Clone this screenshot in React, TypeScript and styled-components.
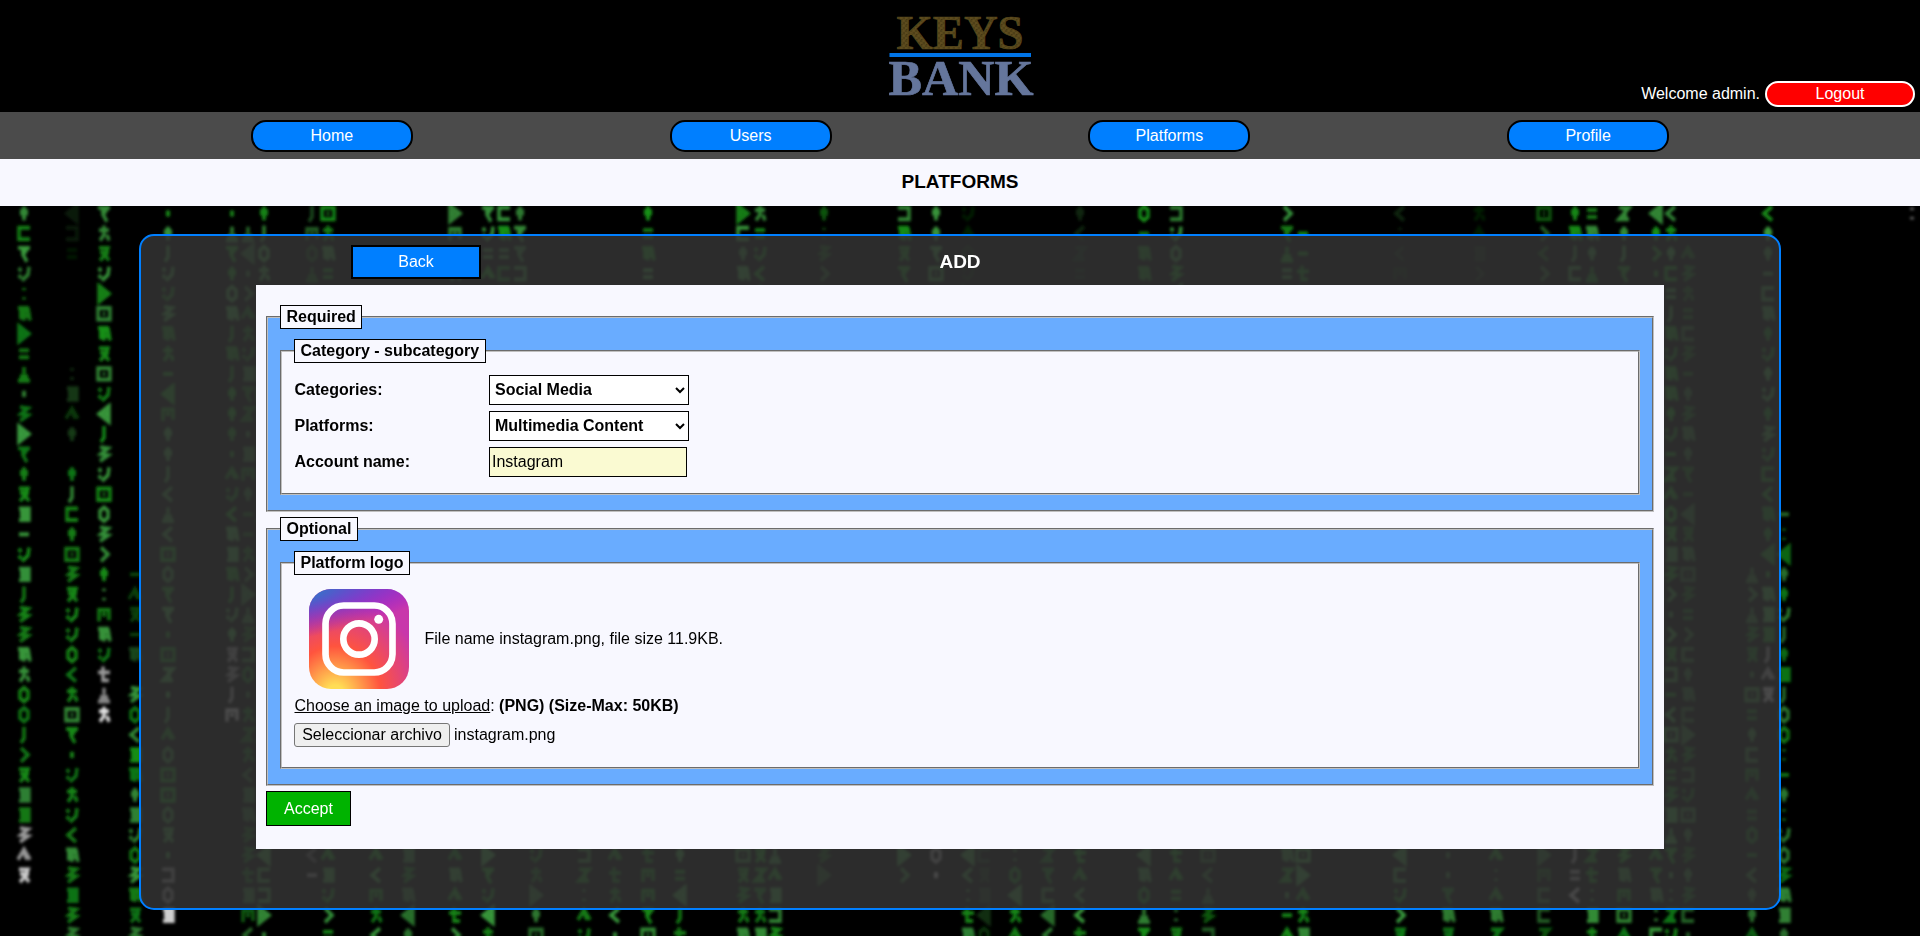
import React from "react";
import styled, { createGlobalStyle } from "styled-components";

const GlobalStyle = createGlobalStyle`
  *, *::before, *::after { box-sizing: border-box; }
  body {
    margin: 0;
    background: #000;
    font-family: Arial, "Liberation Sans", sans-serif;
    font-size: 16px;
    color: #000;
  }
  html, body { overflow: hidden; }
`;

const Page = styled.div`
  display: flex;
  flex-direction: column;
  height: 936px;
`;

const Header = styled.header`
  display: grid;
  grid-template-columns: 1fr auto 1fr;
  height: 112px;
  background: #000;
`;

const LogoSlot = styled.div`
  grid-column: 2;
  width: 160px;
  height: 112px;
`;

const Session = styled.div`
  display: flex;
  align-items: center;
  justify-content: flex-end;
  align-self: end;
  gap: 5px;
  padding: 0 5px 5px 0;
  color: #fff;
`;

const LogoutButton = styled.button`
  width: 150px;
  height: 26px;
  padding: 0 0 1px;
  border: 2px solid #fff;
  border-radius: 13px;
  background: #f00;
  color: #fff;
  font: inherit;
`;

const Nav = styled.nav`
  display: flex;
  justify-content: center;
  height: 47px;
  background: #4b4b4b;
`;

const NavList = styled.div`
  display: grid;
  grid-template-columns: repeat(4, 1fr);
  justify-items: center;
  width: 1675px;
  padding-top: 8px;
`;

const NavButton = styled.button`
  width: 162px;
  height: 32px;
  padding: 0;
  border: 2px solid #000;
  border-radius: 15px;
  background: #007fff;
  color: #fff;
  font: inherit;
`;

const TitleBar = styled.h1`
  display: flex;
  align-items: center;
  justify-content: center;
  height: 47px;
  margin: 0;
  padding-bottom: 1px;
  background: #f8f8ff;
  font-size: 19px;
  font-weight: bold;
`;

const Main = styled.main`
  position: relative;
  display: flex;
  justify-content: center;
  align-items: flex-start;
  flex: 1;
  padding-top: 28px;
  background: #000;
  overflow: hidden;
`;

const RainCanvas = styled.svg`
  position: absolute;
  inset: 0;
`;

const Panel = styled.section`
  position: relative;
  display: flex;
  flex-direction: column;
  align-items: center;
  width: 1642px;
  height: 676px;
  border: 2px solid #007fff;
  border-radius: 15px;
  background: rgba(51, 51, 51, 0.86);
`;

const PanelHead = styled.div`
  display: grid;
  grid-template-columns: 1fr auto 1fr;
  align-items: center;
  width: 1408px;
  height: 49px;
  padding: 2px 0 0 0;
`;

const BackButton = styled.button`
  width: 130px;
  height: 34px;
  margin-left: 95px;
  padding: 0;
  border: 2px solid #000;
  background: #007fff;
  color: #fff;
  font: inherit;
`;

const PanelTitle = styled.h2`
  margin: 0;
  color: #fff;
  font-size: 19px;
  line-height: 22px;
`;

const Form = styled.form`
  width: 1408px;
  height: 564px;
  padding: 20px 10px 0;
  background: #f8f8ff;
`;

const Group = styled.fieldset`
  margin: 0 0 5px;
  padding: 10px 12px 15px;
  border: 2px groove #c0c0c0;
  background: #69acff;
`;

const SubGroup = styled.fieldset<{ $bottom: number }>`
  margin: 0;
  padding: 12px 12px ${(p) => p.$bottom}px;
  border: 2px groove #c0c0c0;
  background: #f8f8ff;
`;

const Legend = styled.legend`
  height: 24px;
  padding: 2px 5.500px;
  border: 1px solid #000;
  background: #f8f8ff;
  font-weight: bold;
  line-height: 18px;
`;

const Fields = styled.div`
  display: grid;
  grid-template-columns: 195px 200px;
  grid-auto-rows: 30px;
  row-gap: 6px;
  align-items: center;
  font-weight: bold;
`;

const FieldLabel = styled.label`
  line-height: 18px;
  padding-left: 0.500px;
`;

const Select = styled.select`
  width: 200px;
  height: 30px;
  padding: 0 0 2px 1px;
  border: 1px solid #000;
  border-radius: 0;
  background: #fff;
  color: #000;
  font: bold 16px Arial, "Liberation Sans", sans-serif;
`;

const TextInput = styled.input`
  width: 198px;
  height: 30px;
  padding: 0 2px 1px;
  border: 1px solid #000;
  background: #fafad2;
  color: #000;
  font: 16px Arial, "Liberation Sans", sans-serif;
`;

const Preview = styled.div`
  display: flex;
  align-items: center;
  gap: 15.500px;
  height: 102px;
  padding: 2px 0 0 15px;
`;

const UploadHint = styled.p`
  margin: 8px 0 8px;
  padding-left: 0.500px;
  line-height: 18px;
`;

const Underlined = styled.span`
  text-decoration: underline;
`;

const FileRow = styled.div`
  display: flex;
  align-items: center;
  gap: 4px;
  height: 24px;
`;

const FileButton = styled.button`
  width: 156px;
  height: 24px;
  padding: 0 0 1px;
  border: 1px solid #767676;
  border-radius: 3px;
  background: #efefef;
  color: #000;
  font: inherit;
`;

const FileName = styled.span`
  padding-bottom: 1px;
`;

const AcceptButton = styled.button`
  display: block;
  width: 85px;
  height: 35px;
  padding: 0;
  border: 1px solid #000;
  background: #00b300;
  color: #fff;
  font: inherit;
`;

function BankLogo() {
  return (
    <svg width="160" height="112" viewBox="0 0 160 112">
      <defs>
        <pattern id="gold" width="5" height="5" patternUnits="userSpaceOnUse">
          <rect width="5" height="5" fill="#58481c" />
          <path d="M0 1h2M3 3h2M1 4.5h1.500" stroke="#463814" strokeWidth="1" />
          <path d="M3 .8h1.500M0 3h2" stroke="#66521f" strokeWidth=".8" />
        </pattern>
      </defs>
      <g fontFamily='"Liberation Serif", serif' fontWeight="bold" strokeWidth=".7">
        <text x="16.500" y="49" fontSize="49" textLength="127" lengthAdjust="spacingAndGlyphs" fill="url(#gold)" stroke="#58481c">
          KEYS
        </text>
        <text x="8.500" y="95" fontSize="51" textLength="145" lengthAdjust="spacingAndGlyphs" fill="#65769c" stroke="#65769c">
          BANK
        </text>
      </g>
      <rect x="9.500" y="53" width="141.500" height="4" fill="#0074e8" />
    </svg>
  );
}

function InstagramLogo() {
  return (
    <svg width="100" height="100" viewBox="0 0 132 132">
      <defs>
        <radialGradient
          id="warm"
          gradientUnits="userSpaceOnUse"
          cx="158.429"
          cy="578.088"
          r="65"
          gradientTransform="matrix(0 -1.98198 1.8439 0 -1031.402 454.004)"
        >
          <stop offset="0" stopColor="#fd5" />
          <stop offset=".1" stopColor="#fd5" />
          <stop offset=".5" stopColor="#ff543e" />
          <stop offset="1" stopColor="#c837ab" />
        </radialGradient>
        <radialGradient
          id="cool"
          gradientUnits="userSpaceOnUse"
          cx="147.694"
          cy="473.455"
          r="65"
          gradientTransform="matrix(.17394 .86872 -3.5818 .71718 1648.348 -458.493)"
        >
          <stop offset="0" stopColor="#3771c8" />
          <stop offset=".128" stopColor="#3771c8" />
          <stop offset="1" stopColor="#60f" stopOpacity="0" />
        </radialGradient>
      </defs>
      <rect width="132" height="132" rx="29" fill="url(#warm)" />
      <rect width="132" height="132" rx="29" fill="url(#cool)" />
      <rect x="21.800" y="21.800" width="88.400" height="88.400" rx="24" fill="none" stroke="#fff" strokeWidth="8.800" />
      <circle cx="66" cy="66" r="20.700" fill="none" stroke="#fff" strokeWidth="8.800" />
      <circle cx="92" cy="40" r="5.900" fill="#fff" />
    </svg>
  );
}

/* Glyph strokes, drawn in a 14x16 cell centred on the origin. */
const glyphs: Record<string, string> = {
  B: "M-6-5H6V5H-6ZM-1 0H1",
  S: "M-5-5H5V5H-5M-4-2H4M-4 1H4M-3 3H4",
  H: "M-6-5H5M-5-2H5M-5 2H5M0-6V6M-3-6V5M4-5L6 6",
  T: "M-5-7L5 0L-5 7ZM-2-3V3M1-1V1",
  L: "M5-7L-5 0L5 7ZM2-3V3M-1-1V1",
  U: "M0-6V0M-5 5H5M-4 2H4M-1-2H1M-6 6H6",
  D: "M0-6V6M-4-2H4M-4 0H4M-2 3H2M-2-4H2",
  d: "M-2-1H2M-2 1H2M0-2V2",
  c: "M0-5V-3M0 3V5",
  v: "M-3-6L4 0L-3 6",
  l: "M4-6L-4 0L4 6",
  k: "M6-5H-5V5H6",
  j: "M-6-5H5V5H-6",
  z: "M-4-6L4-5L-3 0L4 1L-4 6",
  Z: "M-5-5H5L-5 5H5M0-6L2 5",
  O: "M0-6L4-3V3L0 6L-4 3V-3Z",
  m: "M-6 4L0-5L6 4M0-2L3 4",
  h: "M-5 0H5",
  i: "M0-7V3L-3 7",
  s: "M-5-5L-3-2M5-6L4 1L-2 6M-5 1L-3 4",
  E: "M-5-3H5M-5 3H5",
  Y: "M-6-5H6M4-5L-1 1L3 7M-3-2H3",
  f: "M-5-3H5M0-7V1L-4 6M3 1L5 6",
  g: "M-5-5H4L2 0L-4 6M-4-1H5M1 1L5 6",
  n: "M-5 6V-4H5V5M-2 0H2",
  t: "M-6-2H6M-1-7V5H5",
};
const letters = Object.keys(glyphs);

type Column = {
  x: number;
  from?: number;
  to?: number;
  white?: number;
  dim?: number;
  text?: string;
};

const columns: Column[] = [
  { x: 24, text: "DkYscHTEUdzTYDgShsSizzHfOOivgSSzmg", white: 3 },
  { x: 72, from: 0, to: 3, dim: 0.2 },
  { x: 72, from: 8, to: 12, dim: 0.4 },
  { x: 72, from: 13, text: "DikDBzgssOlfBYdsfslHzSzz" },
  { x: 104, text: "YfgsTBHgBsLizsBOzvDcnHstUf", white: 3 },
  { x: 135, from: 18, to: 23, dim: 0.5 },
  { x: 135, from: 24, text: "zOlSHDSsOzHgz" },
  { x: 168, text: "dDisszHfhLnDDilUlBOYYdBZdimOBBOgdjOS", white: 3 },
  { x: 232, text: "dUYDOHiHiDDDdmslHSHisDgzin", white: 4 },
  { x: 248, from: 1, dim: 0.7 },
  { x: 264, text: "DiOf" },
  { x: 312, text: "inOU", dim: 0.6, to: 34, white: 3 },
  { x: 328, text: "BfHEDsOk" },
  { x: 376, from: 18 },
  { x: 408, from: 20, dim: 0.8 },
  { x: 455, text: "Tnsf" },
  { x: 488, text: "YsEm" },
  { x: 504, text: "kHEk", to: 32, white: 2 },
  { x: 520, text: "DYYj", to: 30, dim: 0.9 },
  { x: 536, from: 20, dim: 0.8 },
  { x: 584, from: 15 },
  { x: 615, from: 20 },
  { x: 648, text: "DEHE" },
  { x: 680, from: 20 },
  { x: 743, text: "TkDH" },
  { x: 760, text: "fEsl" },
  { x: 775, from: 20 },
  { x: 824, text: "Dczv", to: 34, dim: 0.6 },
  { x: 904, text: "jHgY", to: 34 },
  { x: 936, text: "DDYB", to: 34, white: 2 },
  { x: 968, dim: 0.25, to: 12 },
  { x: 968, from: 20 },
  { x: 984, from: 25, dim: 0.35 },
  { x: 1015, from: 22 },
  { x: 1048, from: 22, dim: 0.8 },
  { x: 1080, dim: 0.25, to: 14 },
  { x: 1080, from: 20 },
  { x: 1144, text: "OhHH" },
  { x: 1176, text: "jsOz" },
  { x: 1208, from: 22, dim: 0.7 },
  { x: 1287, text: "vYUE" },
  { x: 1303, from: 1 },
  { x: 1400, dim: 0.25, to: 20 },
  { x: 1400, from: 21 },
  { x: 1448, from: 24, dim: 0.8 },
  { x: 1479, dim: 0.25, to: 12 },
  { x: 1496, from: 24 },
  { x: 1544, text: "Bvlv", dim: 0.7 },
  { x: 1575, text: "DHik", to: 35, white: 4 },
  { x: 1592, text: "EHDU" },
  { x: 1624, text: "ZDiY" },
  { x: 1656, text: "LDvd" },
  { x: 1671, text: "lfDkEiHsHHD" },
  { x: 1688, from: 2, dim: 0.7 },
  { x: 1752, from: 18, dim: 0.8 },
  { x: 1768, text: "lDDhkHDsDsDzsklHDLdHSSimg", white: 3 },
  { x: 1784, from: 15, text: "hcLDDsiDSiOOchDcsOzHSD", dim: 0.85 },
  { x: 1912, text: "c", white: 1, dim: 0.6 },
];

const noise = (a: number, b: number) => {
  const n = Math.sin(a * 12.9898 + b * 78.233) * 43758.5453;
  return n - Math.floor(n);
};

function DigitalRain() {
  return (
    <RainCanvas width="1920" height="730" viewBox="0 0 1920 730" aria-hidden="true">
      <defs>
        <filter id="soft" x="0" y="0" width="1" height="1">
          <feGaussianBlur stdDeviation="1.6" />
        </filter>
      </defs>
      <g filter="url(#soft)" fill="none" strokeWidth="3.400">
        <rect width="1920" height="730" />
        {columns.flatMap((column, index) => {
          const from = column.from ?? 0;
          const to = column.to ?? (column.white && column.text ? from + column.text.length : 37);
          const whiteFrom = to - (column.white ?? 0);
          return Array.from({ length: to - from }, (_, i) => {
            const row = from + i;
            const seed = noise(column.x, row);
            const key = column.text?.[i] ?? letters[Math.floor(seed * letters.length)];
            const bright = row >= whiteFrom;
            const last = bright && row === to - 1;
            const color = last ? "#f0f0f0" : bright ? "#a8a8a8" : seed > 0.5 ? "#149018" : "#389a3c";
            return (
              <path
                key={`${index}-${row}`}
                d={glyphs[key]}
                transform={`translate(${column.x} ${7.5 + row * 20.05}) scale(1 1.15)`}
                stroke={color}
                opacity={(column.dim ?? 1) * (0.8 + 0.2 * noise(row, column.x))}
              />
            );
          });
        })}
      </g>
    </RainCanvas>
  );
}

export default function App() {
  return (
    <Page>
      <GlobalStyle />
      <Header>
        <LogoSlot>
          <BankLogo />
        </LogoSlot>
        <Session>
          <span>Welcome admin.</span>
          <LogoutButton>Logout</LogoutButton>
        </Session>
      </Header>
      <Nav>
        <NavList>
          {["Home", "Users", "Platforms", "Profile"].map((label) => (
            <NavButton key={label}>{label}</NavButton>
          ))}
        </NavList>
      </Nav>
      <TitleBar>PLATFORMS</TitleBar>
      <Main>
        <DigitalRain />
        <Panel>
          <PanelHead>
            <BackButton>Back</BackButton>
            <PanelTitle>ADD</PanelTitle>
          </PanelHead>
          <Form onSubmit={(event) => event.preventDefault()}>
            <Group>
              <Legend>Required</Legend>
              <SubGroup $bottom={16}>
                <Legend>Category - subcategory</Legend>
                <Fields>
                  <FieldLabel htmlFor="category">Categories:</FieldLabel>
                  <Select id="category">
                    <option>Social Media</option>
                  </Select>
                  <FieldLabel htmlFor="platform">Platforms:</FieldLabel>
                  <Select id="platform">
                    <option>Multimedia Content</option>
                  </Select>
                  <FieldLabel htmlFor="account">Account name:</FieldLabel>
                  <TextInput id="account" defaultValue="Instagram" />
                </Fields>
              </SubGroup>
            </Group>
            <Group>
              <Legend>Optional</Legend>
              <SubGroup $bottom={20}>
                <Legend>Platform logo</Legend>
                <Preview>
                  <InstagramLogo />
                  <span>File name instagram.png, file size 11.9KB.</span>
                </Preview>
                <UploadHint>
                  <Underlined>Choose an image to upload</Underlined>: <b>(PNG) (Size-Max: 50KB)</b>
                </UploadHint>
                <FileRow>
                  <FileButton type="button">Seleccionar archivo</FileButton>
                  <FileName>instagram.png</FileName>
                </FileRow>
              </SubGroup>
            </Group>
            <AcceptButton>Accept</AcceptButton>
          </Form>
        </Panel>
      </Main>
    </Page>
  );
}
